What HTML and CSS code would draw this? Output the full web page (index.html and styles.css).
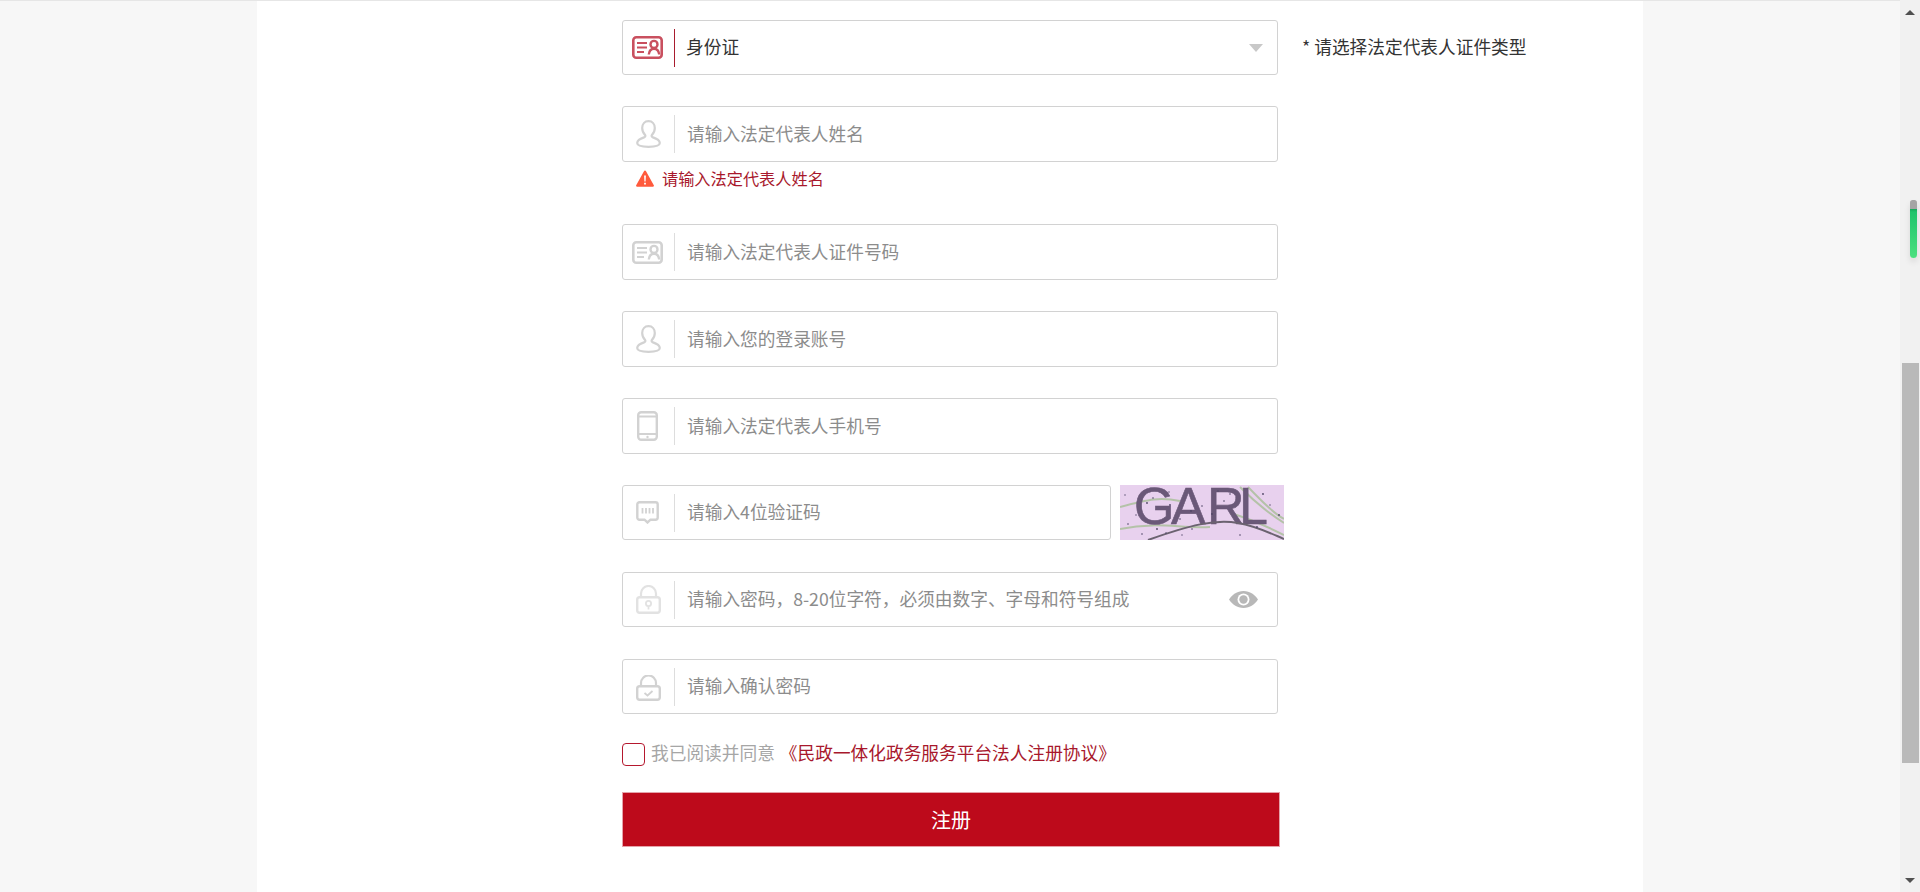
FILE: index.html
```html
<!DOCTYPE html>
<html lang="zh-CN">
<head>
    <meta charset="utf-8">
    <title>法人注册</title>
    <link rel="stylesheet" href="styles.css">
</head>
<body>
    <svg class="icon-defs" width="0" height="0">
        <symbol id="i-card" viewBox="0 0 31 23">
            <rect x="1.300" y="1.300" width="28.400" height="20.400" rx="3" fill="none" stroke="currentColor" stroke-width="2.600"/>
            <path d="M5 7h10M5 11.500h10M5 16h7" fill="none" stroke="currentColor" stroke-width="2.200"/>
            <circle cx="22" cy="8.400" r="3.500" fill="none" stroke="currentColor" stroke-width="2.400"/>
            <path d="M16.800 18.500c.4-4 2.400-5.800 5.200-5.800s4.800 1.800 5.200 5.800" fill="none" stroke="currentColor" stroke-width="2.400"/>
        </symbol>
        <symbol id="i-user" viewBox="0 0 25 28">
            <path d="M12.500 1.200c-3.900 0-6.300 3-6.300 6.900 0 3 1.200 5.300 2.800 6.800.6.600.5 1.700-.4 2.200-3.900 1.300-7.400 3-7.400 6 0 2.600 5 3.700 11.300 3.700s11.300-1.100 11.300-3.700c0-3-3.500-4.700-7.400-6-.9-.5-1-1.600-.4-2.200 1.600-1.500 2.800-3.800 2.800-6.800 0-3.900-2.400-6.900-6.300-6.900z" fill="none" stroke="currentColor" stroke-width="2.200"/>
        </symbol>
        <symbol id="i-phone" viewBox="0 0 21 30">
            <rect x="1.200" y="1.200" width="18.600" height="27.600" rx="3" fill="none" stroke="currentColor" stroke-width="2.400"/>
            <path d="M1 5.500h19M1 23h19" stroke="currentColor" stroke-width="1.800"/>
            <circle cx="10.500" cy="26" r="1.200" fill="currentColor"/>
        </symbol>
        <symbol id="i-msg" viewBox="0 0 23 23">
            <path d="M3.500 1.300h16a2.200 2.200 0 0 1 2.200 2.200v13a2.200 2.200 0 0 1-2.200 2.200h-5l-3 2.800-3-2.800h-5a2.200 2.200 0 0 1-2.200-2.200v-13a2.200 2.200 0 0 1 2.200-2.200z" fill="none" stroke="currentColor" stroke-width="2.400"/>
            <path d="M6.500 7v5.500M10 7v5.500M13.500 7v5.500M17 7v5.500" stroke="currentColor" stroke-width="1.800"/>
        </symbol>
        <symbol id="i-lock" viewBox="0 0 25 29">
            <path d="M5 12V8.500a7.500 7.500 0 0 1 15 0V12" fill="none" stroke="currentColor" stroke-width="2.200"/>
            <rect x="1.200" y="12.200" width="22.600" height="15.600" rx="2.500" fill="none" stroke="currentColor" stroke-width="2.400"/>
            <circle cx="12.500" cy="18.500" r="2.600" fill="none" stroke="currentColor" stroke-width="1.800"/>
            <path d="M12.500 21v3.500" stroke="currentColor" stroke-width="1.800"/>
        </symbol>
        <symbol id="i-lockok" viewBox="0 0 25 26">
            <path d="M5 11V8a7.500 7.500 0 0 1 15 0v3" fill="none" stroke="currentColor" stroke-width="2.200"/>
            <rect x="1.200" y="11.200" width="22.600" height="13.600" rx="2.500" fill="none" stroke="currentColor" stroke-width="2.400"/>
            <path d="M8.500 18l3 2.500 5-4.500" fill="none" stroke="currentColor" stroke-width="1.800"/>
        </symbol>
    </svg>

    <div class="page">
        <main class="main">
            <div class="panel">
                <form class="form">
                    <div class="row">
                        <div class="field field-slim field-active">
                            <span class="field-icon"><svg class="ic-card"><use href="#i-card"/></svg></span>
                            <span class="field-value">身份证</span>
                            <span class="caret"></span>
                        </div>
                        <span class="hint">* 请选择法定代表人证件类型</span>
                    </div>

                    <div class="row row-error">
                        <div class="field">
                            <span class="field-icon"><svg class="ic-user"><use href="#i-user"/></svg></span>
                            <input class="field-input" type="text" placeholder="请输入法定代表人姓名">
                        </div>
                    </div>
                    <div class="error">
                        <svg class="ic-warn" viewBox="0 0 18 17">
                            <path d="M9 .5a1 1 0 0 1 .9.500l7.900 14.200a1 1 0 0 1-.9 1.500H1.100a1 1 0 0 1-.9-1.500L8.100 1A1 1 0 0 1 9 .5z" fill="#ff5a3c"/>
                            <path d="M8.100 5.500h1.800l-.3 6H8.400zM8.100 12.800h1.800v1.800H8.100z" fill="#fff"/>
                        </svg>
                        <span>请输入法定代表人姓名</span>
                    </div>

                    <div class="row">
                        <div class="field">
                            <span class="field-icon"><svg class="ic-card"><use href="#i-card"/></svg></span>
                            <input class="field-input" type="text" placeholder="请输入法定代表人证件号码">
                        </div>
                    </div>

                    <div class="row">
                        <div class="field">
                            <span class="field-icon"><svg class="ic-user"><use href="#i-user"/></svg></span>
                            <input class="field-input" type="text" placeholder="请输入您的登录账号">
                        </div>
                    </div>

                    <div class="row">
                        <div class="field">
                            <span class="field-icon"><svg class="ic-phone"><use href="#i-phone"/></svg></span>
                            <input class="field-input" type="text" placeholder="请输入法定代表人手机号">
                        </div>
                    </div>

                    <div class="row">
                        <div class="field field-slim field-gap field-code">
                            <span class="field-icon"><svg class="ic-msg"><use href="#i-msg"/></svg></span>
                            <input class="field-input" type="text" placeholder="请输入4位验证码">
                        </div>
                        <svg class="captcha" viewBox="0 0 164 55">
                            <path d="M0 22C30 14 40 12 60 16M0 44C40 36 60 44 90 42M120 2c12 12 28 26 44 36M128 2c12 12 22 24 36 32M110 28c14 4 30 10 54 22" fill="none" stroke="#b4c2a8" stroke-width="2"/>
                            <text class="captcha-text" x="14 51 87 119" y="39">GARL</text>
                            <path d="M28 55C70 40 95 34 118 38c18 3 32 10 46 16" fill="none" stroke="#6b6270" stroke-width="2"/>
                            <g fill="#4f4566">
                                <circle cx="27" cy="18" r=".9"/><circle cx="33" cy="13" r=".8"/><circle cx="50" cy="20" r=".9"/><circle cx="49" cy="7" r=".7"/>
                                <circle cx="71" cy="26" r=".9"/><circle cx="82" cy="21" r=".8"/><circle cx="92" cy="29" r=".9"/><circle cx="110" cy="9" r=".8"/>
                                <circle cx="98" cy="6" r=".7"/><circle cx="143" cy="9" r=".9"/><circle cx="159" cy="30" r=".9"/><circle cx="22" cy="49" r=".8"/>
                                <circle cx="8" cy="39" r=".8"/><circle cx="37" cy="44" r=".9"/><circle cx="72" cy="44" r=".8"/><circle cx="137" cy="42" r=".9"/>
                                <circle cx="150" cy="20" r=".7"/><circle cx="62" cy="50" r=".7"/><circle cx="5" cy="10" r=".7"/><circle cx="120" cy="50" r=".8"/>
                                <circle cx="60" cy="34" r=".8"/><circle cx="104" cy="16" r=".8"/><circle cx="16" cy="30" r=".7"/><circle cx="46" cy="48" r=".8"/>
                            </g>
                        </svg>
                    </div>

                    <div class="row">
                        <div class="field field-slim field-gap">
                            <span class="field-icon"><svg class="ic-lock"><use href="#i-lock"/></svg></span>
                            <input class="field-input" type="password" placeholder="请输入密码，8-20位字符，必须由数字、字母和符号组成">
                            <svg class="ic-eye" viewBox="0 0 29 17">
                                <path d="M14.500 0C8 0 3 3.800 0 8.500 3 13.200 8 17 14.500 17S26 13.200 29 8.500C26 3.800 21 0 14.500 0z" fill="#b8b8b8"/>
                                <circle cx="14.500" cy="8.500" r="6" fill="#fff"/>
                                <circle cx="14.500" cy="8.500" r="4.200" fill="#b8b8b8"/>
                            </svg>
                        </div>
                    </div>

                    <div class="row">
                        <div class="field field-slim field-gap">
                            <span class="field-icon"><svg class="ic-lockok"><use href="#i-lockok"/></svg></span>
                            <input class="field-input" type="password" placeholder="请输入确认密码">
                        </div>
                    </div>

                    <label class="agree">
                        <input class="agree-box" type="checkbox">
                        <span class="agree-text">我已阅读并同意</span>
                        <a class="agree-link" href="#">《民政一体化政务服务平台法人注册协议》</a>
                    </label>

                    <button class="submit" type="button">注册</button>
                </form>
            </div>
        </main>

        <aside class="scrollbar">
            <span class="arrow arrow-up"></span>
            <div class="scroll-track"><div class="scroll-thumb"></div></div>
            <span class="arrow arrow-down"></span>
            <div class="slider"></div>
        </aside>
    </div>
</body>
</html>
```

FILE: styles.css
```css
* {
    box-sizing: border-box;
}
html, body {
    margin: 0;
    padding: 0;
    height: 100%;
    overflow: hidden;
}
body {
    font-family: "Noto Sans CJK SC", "Liberation Sans", sans-serif;
    font-size: 17.7px;
    color: #333;
    background-color: #f7f7f7;
}
.icon-defs {
    position: absolute;
}
.page {
    display: flex;
    height: 100vh;
}
.main {
    flex: 1;
    min-width: 0;
    border-top: 1px solid #e6e6e6;
}
.panel {
    width: 1386px;
    height: 100%;
    margin: 0 auto;
    padding: 19px 0 0 365px;
    background: #fff;
}
.form {
    display: flex;
    flex-direction: column;
    align-items: flex-start;
}

/* rows */
.row {
    display: flex;
    align-items: flex-start;
    margin-bottom: 31px;
}
.row-error {
    margin-bottom: 0;
}
.field {
    display: flex;
    align-items: center;
    width: 656px;
    height: 56px;
    border: 1px solid #d2d2d2;
    border-radius: 3px;
    background: #fff;
}
.field-slim {
    height: 55px;
}
.field-gap {
    margin-bottom: 1px;
}
.field-code {
    width: 489px;
}
.field-icon {
    display: flex;
    flex: none;
    align-items: center;
    justify-content: center;
    width: 52px;
    height: 38px;
    border-right: 1px solid #ddd;
    color: #d2d2d2;
}
.field-active .field-icon {
    border-right-color: #a81c2e;
    color: #c9505f;
}
.field-input {
    flex: 1;
    min-width: 0;
    height: 100%;
    padding: 0 0 3px 12px;
    border: none;
    outline: none;
    background: transparent;
    font-family: inherit;
    font-size: 17.7px;
    color: #333;
}
.field-input::placeholder {
    color: #8c8c8c;
    opacity: 1;
}
.field-value {
    flex: 1;
    padding: 0 0 3px 11px;
}
.caret {
    flex: none;
    width: 0;
    height: 0;
    margin-right: 14px;
    border-left: 7.5px solid transparent;
    border-right: 7.5px solid transparent;
    border-top: 8px solid #c8c8c8;
}
.hint {
    margin-left: 24px;
    line-height: 52px;
    color: #333;
}

/* icons */
.ic-card {
    width: 31px;
    height: 23px;
    margin-left: -2px;
}
.ic-user {
    width: 25px;
    height: 28px;
}
.ic-phone {
    width: 21px;
    height: 30px;
    margin-left: -2px;
}
.ic-msg {
    width: 23px;
    height: 23px;
    margin-left: -2px;
}
.ic-lock {
    width: 25px;
    height: 29px;
    color: #e2e2e2;
}
.ic-lockok {
    width: 25px;
    height: 26px;
    margin-top: 3px;
}
.ic-warn {
    flex: none;
    width: 18px;
    height: 17px;
    margin-right: 8px;
}
.ic-eye {
    flex: none;
    width: 29px;
    height: 17px;
    margin-right: 19px;
}

.error {
    display: flex;
    align-items: center;
    height: 62px;
    padding: 0 0 30px 14px;
    font-size: 16.2px;
    color: #a8182c;
}
.error span {
    margin-top: -1px;
}
.captcha {
    flex: none;
    width: 164px;
    height: 55px;
    margin-left: 9px;
    background: #e8d1ee;
}
.captcha-text {
    font-family: "Liberation Sans", sans-serif;
    font-size: 52px;
    fill: #6a5878;
    stroke: #6a5878;
    stroke-width: 0.6;
}

/* agreement and submit */
.agree {
    display: flex;
    align-items: flex-start;
    height: 49px;
    margin-top: -3px;
    line-height: 19px;
}
.agree-box {
    appearance: none;
    width: 23px;
    height: 23px;
    margin: 0 6px 0 0;
    border: 1px solid #b5182e;
    border-radius: 4px;
    background: #fff;
}
.agree-text {
    color: #a6a6a6;
}
.agree-link {
    margin-left: 5px;
    color: #a8182c;
    text-decoration: none;
}
.submit {
    width: 658px;
    height: 55px;
    padding: 0;
    border: 1px solid #e5a3aa;
    background-color: #bd0a1b;
    color: #fff;
    font-family: inherit;
    font-size: 20px;
}

/* page scrollbar */
.scrollbar {
    position: relative;
    display: flex;
    flex: none;
    flex-direction: column;
    width: 20px;
    background: #f1f1f1;
}
.scroll-track {
    flex: 1;
    padding: 0 1px 0 2px;
}
.scroll-thumb {
    height: 400px;
    margin-top: 346px;
    background: #b9b9b9;
}
.arrow {
    flex: none;
    align-self: center;
    width: 0;
    height: 0;
    border-left: 5px solid transparent;
    border-right: 5px solid transparent;
}
.arrow-up {
    margin: 10px 0 2px;
    border-bottom: 5px solid #505050;
}
.arrow-down {
    margin: 2px 0 9px;
    border-top: 5px solid #505050;
}
.slider {
    position: absolute;
    top: 200px;
    left: 10px;
    width: 7px;
    height: 58px;
    border-radius: 3px 3px 4px 4px;
    background: linear-gradient(#a5a5a5 0, #a5a5a5 9px, #16a85a 9px, #1fc46c 12px, #4be07f 100%);
    box-shadow: 0 4px 6px rgba(0, 0, 0, 0.1);
}
```
